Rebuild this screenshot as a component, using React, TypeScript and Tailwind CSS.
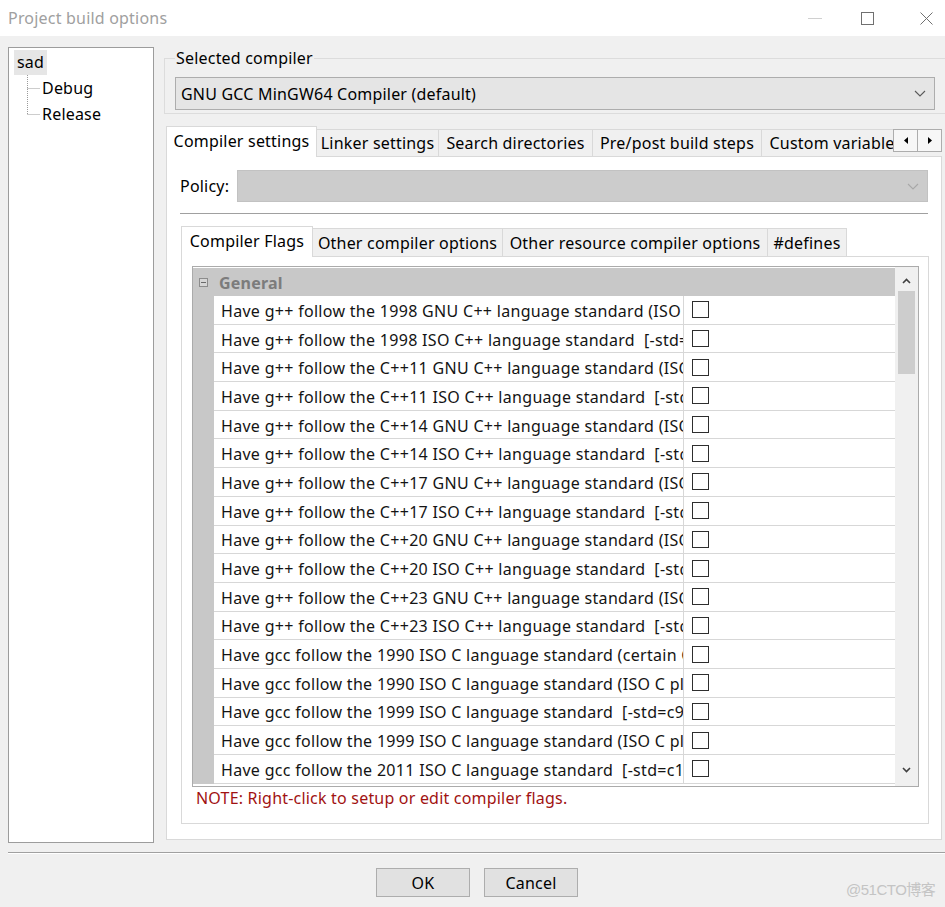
import React from 'react';

const flags = [
  'Have g++ follow the 1998 GNU C++ language standard (ISO C++ plus GNU extensions)  [-std=gnu++98]',
  'Have g++ follow the 1998 ISO C++ language standard  [-std=c++98]',
  'Have g++ follow the C++11 GNU C++ language standard (ISO C++ plus GNU extensions)  [-std=gnu++11]',
  'Have g++ follow the C++11 ISO C++ language standard  [-std=c++11]',
  'Have g++ follow the C++14 GNU C++ language standard (ISO C++ plus GNU extensions)  [-std=gnu++14]',
  'Have g++ follow the C++14 ISO C++ language standard  [-std=c++14]',
  'Have g++ follow the C++17 GNU C++ language standard (ISO C++ plus GNU extensions)  [-std=gnu++17]',
  'Have g++ follow the C++17 ISO C++ language standard  [-std=c++17]',
  'Have g++ follow the C++20 GNU C++ language standard (ISO C++ plus GNU extensions)  [-std=gnu++20]',
  'Have g++ follow the C++20 ISO C++ language standard  [-std=c++20]',
  'Have g++ follow the C++23 GNU C++ language standard (ISO C++ plus GNU extensions)  [-std=gnu++23]',
  'Have g++ follow the C++23 ISO C++ language standard  [-std=c++23]',
  'Have gcc follow the 1990 ISO C language standard (certain GNU extensions that conflict with ISO C90 are disabled)  [-ansi]',
  'Have gcc follow the 1990 ISO C language standard (ISO C plus GNU extensions)  [-std=gnu90]',
  'Have gcc follow the 1999 ISO C language standard  [-std=c99]',
  'Have gcc follow the 1999 ISO C language standard (ISO C plus GNU extensions)  [-std=gnu99]',
  'Have gcc follow the 2011 ISO C language standard  [-std=c11]',
];

const outerTabs = [
  { label: 'Linker settings', w: 'w-[123px]' },
  { label: 'Search directories', w: 'w-[155px]' },
  { label: 'Pre/post build steps', w: 'w-[170px]' },
  { label: 'Custom variables', w: 'w-[150px]' },
];

const innerTabs = [
  { label: 'Other compiler options', w: 'w-[191px]' },
  { label: 'Other resource compiler options', w: 'w-[266px]' },
  { label: '#defines', w: 'w-[80px]' },
];

const Chevron = ({ className }: { className?: string }) => (
  <svg width="12" height="7" viewBox="0 0 12 7" className={className}>
    <path d="M1 1l5 5 5-5" fill="none" stroke="currentColor" strokeWidth="1.1" />
  </svg>
);

const TreeLink = ({ last }: { last?: boolean }) => (
  <svg width="33" height="26" viewBox="0 0 33 26" className="shrink-0">
    <path
      d={last ? 'M18.5 0V13.5M18.5 13.5H31' : 'M18.5 0V26M18.5 13.5H31'}
      stroke="#9a9a9a"
      strokeDasharray="1 1"
      fill="none"
    />
  </svg>
);

const FlagRow = ({ text }: { text: string }) => (
  <div className="flex h-[28.7px]">
    <div className="w-[21px] shrink-0 bg-[#c8c8c8]" />
    <div className="w-[470px] shrink-0 border-b border-r border-[#d7d7d7] pl-[7px] pt-[2px] flex items-center overflow-hidden whitespace-pre text-[#141414] tracking-[0.3px]">
      {text}
    </div>
    <div className="flex-1 border-b border-[#d7d7d7] pl-[8px] flex items-center">
      <div className="w-[17px] h-[17px] border border-[#2e2e2e] bg-white" />
    </div>
  </div>
);

export default function App() {
  return (
    <div className="relative w-[945px] h-[907px] bg-[#f0f0f0] overflow-hidden flex flex-col font-['Noto_Sans',sans-serif] text-[16px] leading-[20px] tracking-[0.2px] text-black">
      {/* title bar */}
      <div className="h-[36px] bg-white flex items-center shrink-0">
        <span className="pl-[8px] text-[#a0a0a0]">Project build options</span>
        <div className="ml-auto flex items-center pr-[12px]">
          <div className="w-[14px] h-px bg-[#d0d0d0]" />
          <div className="ml-[39px] w-[13px] h-[13px] border border-[#707070]" />
          <svg width="13" height="13" viewBox="0 0 13 13" className="ml-[46px]">
            <path d="M0.5 0.5l12 12M12.5 0.5l-12 12" stroke="#707070" strokeWidth="1" />
          </svg>
        </div>
      </div>

      <div className="flex-1 flex flex-col pl-[8px]">
        <div className="flex pt-[11px]">
          {/* project tree */}
          <div className="w-[146px] h-[796px] shrink-0 border border-[#9c9c9c] bg-white pt-[1px]">
            <div className="h-[26px] flex items-center">
              <span className="ml-[5px] px-[3px] h-[25px] flex items-center bg-[#e6e6e6]">sad</span>
            </div>
            <div className="h-[26px] flex items-center">
              <TreeLink />
              <span>Debug</span>
            </div>
            <div className="h-[26px] flex items-center">
              <TreeLink last />
              <span>Release</span>
            </div>
          </div>

          {/* right side */}
          <div className="ml-[10px] w-[784px] shrink-0 flex flex-col">
            <fieldset className="mt-[1px] min-w-0 border border-[#dcdcdc] px-[10px] pt-[9px] pb-[3px]">
              <legend className="px-[1px] leading-[20px]">Selected compiler</legend>
              <div className="w-[760px] h-[33px] border border-[#adadad] bg-[#e5e5e5] flex items-center pl-[5px] pr-[8px]">
                <span>GNU GCC MinGW64 Compiler (default)</span>
                <Chevron className="ml-auto text-[#5a5a5a]" />
              </div>
            </fieldset>

            {/* outer tabs */}
            <div className="ml-[2px] mt-[12px] w-[776px] h-[30px] flex items-end relative z-10">
              <div className="w-[727px] h-[31px] flex items-end overflow-hidden self-start">
                <div className="w-[151px] h-[31px] shrink-0 bg-white border border-b-0 border-[#d9d9d9] flex items-center justify-center pb-[2px]">
                  Compiler settings
                </div>
                {outerTabs.map((t) => (
                  <div
                    key={t.label}
                    className={`${t.w} h-[27px] shrink-0 -ml-px bg-[#f0f0f0] border border-b-0 border-[#d9d9d9] flex items-center justify-center whitespace-nowrap mb-[1px]`}
                  >
                    {t.label}
                  </div>
                ))}
              </div>
              <div className="self-start mt-[3px] flex">
                <div className="w-[25px] h-[23px] border border-[#adadad] bg-[#f7f7f7] flex items-center justify-center">
                  <svg width="4" height="7" viewBox="0 0 4 7"><path d="M4 0v7L0 3.5z" fill="#000" /></svg>
                </div>
                <div className="w-[25px] h-[23px] -ml-px border border-[#adadad] bg-[#f7f7f7] flex items-center justify-center">
                  <svg width="4" height="7" viewBox="0 0 4 7"><path d="M0 0v7L4 3.5z" fill="#000" /></svg>
                </div>
              </div>
            </div>

            {/* compiler settings page */}
            <div className="ml-[2px] w-[776px] h-[684px] border border-[#d9d9d9] bg-white px-[13px] pt-[13px]">
              <div className="flex items-center">
                <span className="w-[57px]">Policy:</span>
                <div className="w-[693px] h-[32px] bg-[#cccccc] border border-[#c2c2c2] flex items-center justify-end pr-[8px]">
                  <Chevron className="text-[#a8a8a8]" />
                </div>
              </div>
              <div className="mt-[11px] w-[748px] h-px bg-[#a0a0a0]" />
              <div className="w-[748px] h-px bg-white" />

              {/* inner tabs */}
              <div className="ml-[1px] mt-[11px] h-[31px] flex items-end relative z-10">
                <div className="w-[132px] h-[31px] shrink-0 bg-white border border-b-0 border-[#d9d9d9] flex items-center justify-center pb-[2px]">
                  Compiler Flags
                </div>
                {innerTabs.map((t) => (
                  <div
                    key={t.label}
                    className={`${t.w} h-[28px] shrink-0 -ml-px bg-[#f0f0f0] border border-b-0 border-[#d9d9d9] flex items-center justify-center whitespace-nowrap mb-[1px]`}
                  >
                    {t.label}
                  </div>
                ))}
              </div>

              <div className="ml-[1px] -mt-px w-[748px] h-[568px] border border-[#d9d9d9] bg-white pl-[10px] pt-[9px]">
                {/* property grid */}
                <div className="w-[727px] h-[521px] border border-[#ababab] flex overflow-hidden">
                  <div className="w-[702px] shrink-0 pt-px overflow-hidden">
                    <div className="h-[28px] bg-[#c8c8c8] flex items-center">
                      <div className="ml-[6px] w-[9px] h-[9px] border border-[#8c8c8c] flex items-center justify-center bg-[#d6d6d6]">
                        <div className="w-[5px] h-px bg-[#6a6a6a]" />
                      </div>
                      <span className="ml-[11px] pt-[2px] font-bold text-[#7c7c7c]">General</span>
                    </div>
                    {flags.map((f) => (
                      <FlagRow key={f} text={f} />
                    ))}
                  </div>
                  <div className="flex-1 bg-[#f0f0f0] flex flex-col items-center">
                    <div className="h-[24px] flex items-center pt-[4px]">
                      <svg width="9" height="6" viewBox="0 0 9 6"><path d="M1 5l3.5-3.5L8 5" fill="none" stroke="#404040" strokeWidth="1.6" /></svg>
                    </div>
                    <div className="w-[17px] h-[83px] bg-[#cdcdcd]" />
                    <div className="mt-auto h-[26px] flex items-center pb-[6px]">
                      <svg width="9" height="6" viewBox="0 0 9 6"><path d="M1 1l3.5 3.5L8 1" fill="none" stroke="#404040" strokeWidth="1.6" /></svg>
                    </div>
                  </div>
                </div>
                <div className="mt-px ml-[4px] text-[#a11212]">NOTE: Right-click to setup or edit compiler flags.</div>
              </div>
            </div>
          </div>
        </div>

        {/* bottom */}
        <div className="mt-[9px] h-px bg-[#a0a0a0]" />
        <div className="h-px bg-white" />
        <div className="mt-[14px] ml-[368px] flex gap-[14px]">
          <button className="w-[94px] h-[29px] border border-[#adadad] bg-[#e1e1e1] flex items-center justify-center">OK</button>
          <button className="w-[94px] h-[29px] border border-[#adadad] bg-[#e1e1e1] flex items-center justify-center">Cancel</button>
        </div>
      </div>

      <span className="absolute left-[846px] top-[880px] text-[15px] text-[#c4c4c4] font-['Liberation_Sans','Noto_Sans_CJK_SC',sans-serif] tracking-[-0.5px]">@51CTO博客</span>
    </div>
  );
}
